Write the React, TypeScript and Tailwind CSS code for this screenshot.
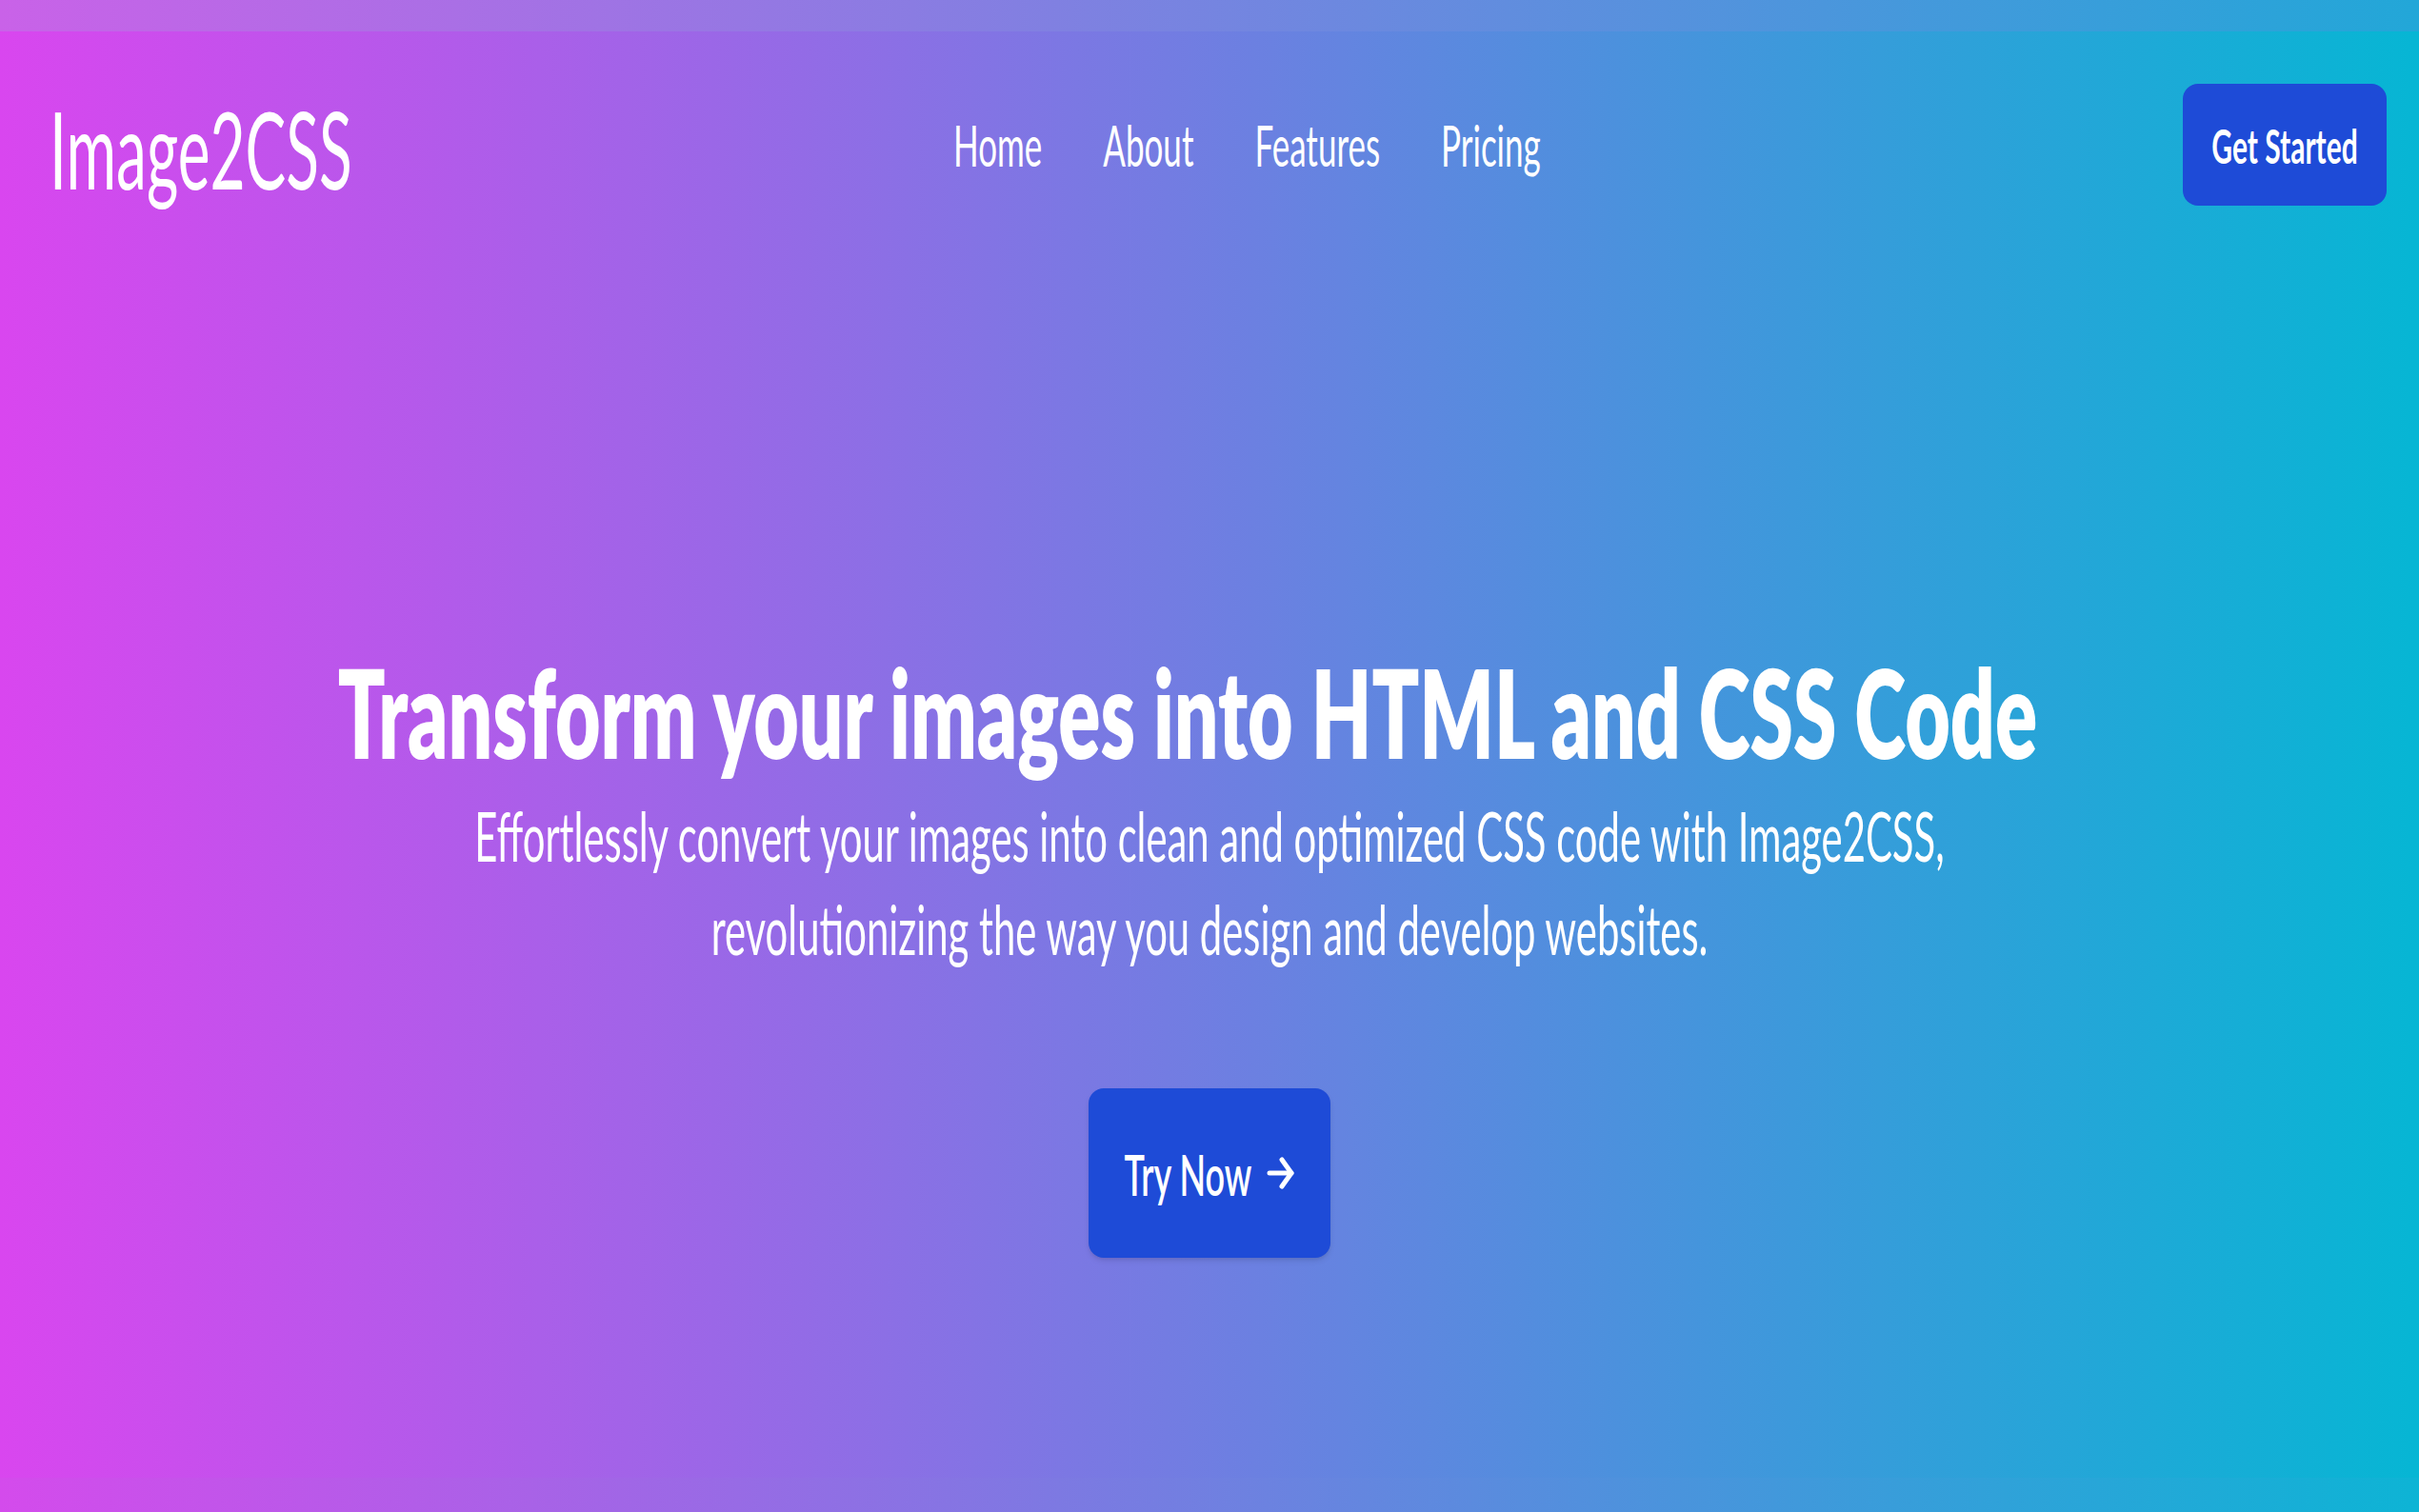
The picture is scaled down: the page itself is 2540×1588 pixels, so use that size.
import React from 'react';

// The reference is a horizontally squeezed capture, so text is stretched
// vertically around its centre to get the same narrow look.
const Stretch: React.FC<{ className: string; children: React.ReactNode }> = ({ className, children }) => (
  <span className={`inline-block whitespace-nowrap leading-none ${className}`}>{children}</span>
);

const Arrow = () => (
  <svg width="29" height="38" viewBox="0 0 29 38" fill="none" stroke="currentColor" strokeWidth="5" strokeLinecap="round" strokeLinejoin="round">
    <path d="M3 19H26" />
    <path d="M16 5L26 19L16 33" />
  </svg>
);

const navItems = ['Home', 'About', 'Features', 'Pricing'];

export default function App() {
  return (
    <div className="flex h-screen w-full flex-col overflow-hidden font-[Lato,sans-serif] text-white">
      <div className="h-[33px] shrink-0 bg-linear-to-r/srgb from-[#c962e8] to-[#22a7d8]" />

      <section className="flex flex-1 flex-col bg-linear-to-r/srgb from-[#d946ef] to-[#06b6d4]">
        <header className="flex h-[238px] items-center pl-[52px] pr-[34px]">
          <div className="w-[949px] pt-[10px]">
            <Stretch className="text-[64px] scale-y-[1.77]">Image2CSS</Stretch>
          </div>
          <nav className="flex gap-[64px]">
            {navItems.map((item) => (
              <a key={item} href="#" className="block">
                <Stretch className="text-[35px] scale-y-[1.71]">{item}</Stretch>
              </a>
            ))}
          </nav>
          <button className="ml-auto flex h-[128px] w-[214px] items-center justify-center rounded-[16px] bg-[#1e4bd7]">
            <Stretch className="text-[30px] font-bold scale-y-[1.68]">Get Started</Stretch>
          </button>
        </header>

        <main className="flex flex-col items-center pt-[400px]">
          <div className="flex h-[150px] items-center pr-[46px]">
            <h1 className="m-0">
              <Stretch className="text-[82px] font-extrabold scale-y-[1.58]">
                Transform your images into HTML and CSS Code
              </Stretch>
            </h1>
          </div>
          <div className="mt-[6px] flex h-[200px] items-center">
            <p className="text-center text-[41.8px] leading-[57px] whitespace-nowrap scale-y-[1.73]">
              Effortlessly convert your images into clean and optimized CSS code with Image2CSS,
              <br />
              revolutionizing the way you design and develop websites.
            </p>
          </div>
          <button className="mt-[116px] flex h-[178px] w-[254px] items-center justify-center gap-[16px] rounded-[16px] bg-[#1e4bd7] shadow-md">
            <Stretch className="text-[36px] font-semibold scale-y-[1.68]">Try Now</Stretch>
            <Arrow />
          </button>
        </main>
      </section>

      <div className="h-[36px] shrink-0 bg-linear-to-r/srgb from-[#d44bec] to-[#0db4d5]" />
    </div>
  );
}
